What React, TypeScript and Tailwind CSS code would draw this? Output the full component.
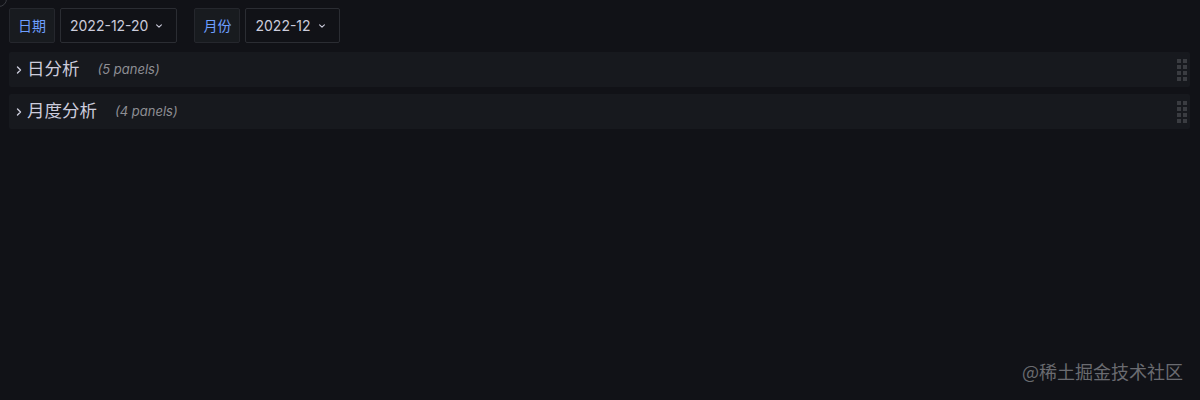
import React from 'react';

const font = { fontFamily: 'Inter, "Noto Sans CJK SC", sans-serif' };

const Chevron: React.FC = () => (
    <svg width="8" height="8" viewBox="0 0 10 10" fill="none" className="ml-[7px] mt-[1px]">
        <path d="M2 3.5 L5 6.5 L8 3.5" stroke="#ccccdc" strokeWidth="1.4" strokeLinecap="round" strokeLinejoin="round" />
    </svg>
);

const Variable: React.FC<{ label: string; value: string }> = ({ label, value }) => (
    <div className="flex items-center gap-[5px]">
        <div className="h-[35px] w-[46px] flex items-center justify-center rounded-[2px] border border-[#25272d] bg-[#181b1f] text-[14px] text-[#6e9fff]">
            {label}
        </div>
        <div className="h-[35px] flex items-center pl-[9px] pr-[13px] rounded-[2px] border border-[#2b2d33] bg-[#111217] text-[14px] text-[#ccccdc]">
            {value}
            <Chevron />
        </div>
    </div>
);

const DragHandle: React.FC = () => (
    <div className="grid grid-cols-2 gap-[2px]">
        {Array.from({ length: 8 }).map((_, i) => (
            <span key={i} className="block w-[4px] h-[4px] bg-[#3a3c41]" />
        ))}
    </div>
);

const Row: React.FC<{ title: string; count: number }> = ({ title, count }) => (
    <div className="h-[35px] flex items-center rounded-[2px] bg-[#17191e] pl-[6px] pr-[3px]">
        <svg width="8" height="10" viewBox="0 0 8 10" fill="none" className="mr-[4px]">
            <path d="M2.5 2 L5.5 5 L2.5 8" stroke="#ccccdc" strokeWidth="1.4" strokeLinecap="round" strokeLinejoin="round" />
        </svg>
        <span className="text-[17.5px] text-[#ccccdc]">{title}</span>
        <span className="ml-[18px] text-[13px] italic text-[#8e8e94]">({count} panels)</span>
        <div className="ml-auto">
            <DragHandle />
        </div>
    </div>
);

const App: React.FC = () => {
    return (
        <div className="relative w-[1200px] h-[400px] overflow-hidden bg-[#111217]" style={font}>
            <div className="absolute -left-[9px] -top-[9px] w-[16px] h-[16px] rounded-full border border-[#3a3c42]" />
            <div className="pt-[8px] pl-[9px] flex items-center gap-[17px]">
                <Variable label="日期" value="2022-12-20" />
                <Variable label="月份" value="2022-12" />
            </div>
            <div className="mt-[9px] pl-[9px] pr-[10px] flex flex-col gap-[7px]">
                <Row title="日分析" count={5} />
                <Row title="月度分析" count={4} />
            </div>
            <div className="absolute right-[17px] bottom-[15px] text-[18px] text-[#6a6b70]" style={{ fontFamily: '"Noto Sans CJK SC", sans-serif' }}>
                @稀土掘金技术社区
            </div>
        </div>
    );
};

export default App;
